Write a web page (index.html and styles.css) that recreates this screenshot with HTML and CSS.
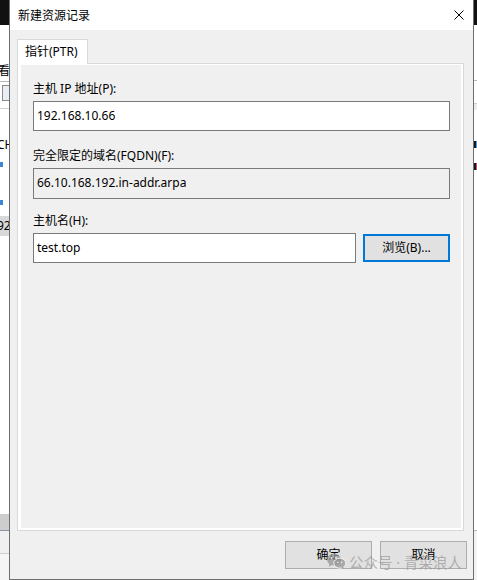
FILE: index.html
```html
<!DOCTYPE html>
<html lang="zh-CN">
<head>
<meta charset="utf-8">
<title>新建资源记录</title>
<link rel="stylesheet" href="styles.css">
</head>
<body>
<div class="screen">
  <!-- window behind the dialog, left edge -->
  <div class="behind behind-left">
    <div class="bk-caption"></div>
    <div class="bk-space s37"></div>
    <div class="bk-menu">看</div>
    <div class="bk-toolbar"><span class="bk-tool"></span></div>
    <div class="bk-space s29"></div>
    <div class="bk-row">CH</div>
    <div class="bk-space s10"></div>
    <div class="bk-mark blue"></div>
    <div class="bk-space s33"></div>
    <div class="bk-mark blue"></div>
    <div class="bk-space s11"></div>
    <div class="bk-row selected">92</div>
    <div class="bk-fill"></div>
    <div class="bk-status"></div>
    <div class="bk-bar"></div>
    <div class="bk-foot"></div>
  </div>

  <div class="dialog">
    <div class="titlebar">
      <span class="title">新建资源记录</span>
      <svg class="close" width="10" height="10" viewBox="0 0 10 10" aria-hidden="true">
        <path d="M0.5 0.5 L9.5 9.5 M9.5 0.5 L0.5 9.5" stroke="#000" stroke-width="1" fill="none"/>
      </svg>
    </div>

    <div class="body">
      <div class="tabs">
        <div class="tab">指针(PTR)</div>
      </div>

      <div class="panel">
        <div class="page">
          <div class="field f-ip">
            <div class="label">主机 IP 地址(P):</div>
            <div class="textbox">192.168.10.66</div>
          </div>
          <div class="field f-fqdn">
            <div class="label">完全限定的域名(FQDN)(F):</div>
            <div class="textbox readonly">66.10.168.192.in-addr.arpa</div>
          </div>
          <div class="field f-host">
            <div class="label">主机名(H):</div>
            <div class="host-row">
              <div class="textbox host">test.top</div>
              <button class="btn focused" type="button">浏览(B)...</button>
            </div>
          </div>
        </div>
      </div>

      <div class="actions">
        <button class="btn" type="button">确定</button>
        <button class="btn" type="button">取消</button>
      </div>
    </div>

    <div class="watermark">
      <svg class="wx" width="19" height="16" viewBox="0 0 19 16" aria-hidden="true">
        <ellipse cx="7" cy="6.5" rx="7" ry="6" fill="currentColor"/>
        <path d="M2.5 10.5 L1.8 13.8 L5.5 11.8 Z" fill="currentColor"/>
        <ellipse cx="12.8" cy="10.2" rx="6" ry="5" fill="currentColor" stroke="#f3f3f3" stroke-width="1"/>
        <path d="M16.2 13.5 L17.2 15.8 L14.2 14.6 Z" fill="currentColor"/>
        <circle cx="4.6" cy="4.8" r="0.9" fill="#f3f3f3"/>
        <circle cx="9" cy="4.8" r="0.9" fill="#f3f3f3"/>
        <circle cx="10.8" cy="9.2" r="0.8" fill="#f3f3f3"/>
        <circle cx="14.6" cy="9.2" r="0.8" fill="#f3f3f3"/>
      </svg>
      <span>公众号 · 青菜浪人</span>
    </div>
  </div>

  <!-- window behind the dialog, right edge -->
  <div class="behind behind-right">
    <div class="bk-caption"></div>
    <div class="bk-space s55"></div>
    <div class="bk-line"></div>
    <div class="bk-space s22"></div>
    <div class="bk-band"></div>
    <div class="bk-space s31"></div>
    <div class="bk-mark tree"></div>
    <div class="bk-space s15"></div>
    <div class="bk-mark tree pink"></div>
    <div class="bk-fill"></div>
    <div class="bk-line"></div>
    <div class="bk-foot light"></div>
  </div>
</div>
</body>
</html>
```

FILE: styles.css
```css
* {
  box-sizing: border-box;
}

html,
body {
  margin: 0;
  padding: 0;
  background: #ffffff;
}

body {
  font-family: "Noto Sans", "Noto Sans CJK SC", sans-serif;
  font-size: 12px;
  color: #000000;
}

.screen {
  display: grid;
  grid-template-columns: 9px 465px 3px;
  width: 477px;
  height: 580px;
  overflow: hidden;
}

/* ---------- windows behind the dialog ---------- */

.behind {
  display: flex;
  flex-direction: column;
  height: 580px;
  overflow: hidden;
  background: #ffffff;
}

.bk-caption {
  height: 25px;
  background: #111111;
}

.bk-space.s10 { height: 10px; }
.bk-space.s11 { height: 11px; }
.bk-space.s15 { height: 15px; }
.bk-space.s22 { height: 22px; }
.bk-space.s29 { height: 29px; }
.bk-space.s31 { height: 31px; }
.bk-space.s33 { height: 33px; }
.bk-space.s37 { height: 37px; }
.bk-space.s55 { height: 55px; }

.bk-menu {
  height: 19px;
  line-height: 18px;
  font-size: 12px;
  white-space: nowrap;
  margin-left: -2px;
}

.bk-toolbar {
  height: 28px;
  border-top: 1px solid #b9b9b9;
  border-bottom: 1px solid #d0d0d0;
  padding: 3px 0 0 2px;
}

.bk-tool {
  display: block;
  width: 10px;
  height: 16px;
  border: 1px solid #8a8a8a;
  background: #e8eef4;
}

.bk-row {
  height: 14px;
  line-height: 14px;
  white-space: nowrap;
  margin-left: -3px;
}

.bk-row.selected {
  height: 20px;
  line-height: 20px;
  margin-left: 0;
  padding-left: 0;
  background: #d9d9d9;
  text-indent: -3px;
}

.bk-mark {
  height: 5px;
  width: 3px;
}

.bk-mark.blue {
  background: #3b86d6;
}

.bk-mark.tree {
  height: 7px;
  width: 2px;
  background: #1a1a1a;
  box-shadow: 1px 0 0 #4aa3e8;
}

.bk-mark.tree.pink {
  box-shadow: 1px 0 0 #c04a7a;
}

.bk-fill {
  flex: 1;
}

.bk-status {
  height: 17px;
  background: #cdcdcd;
  border-bottom: 1px solid #8896a8;
}

.bk-bar {
  height: 23px;
  background: #f0f0f0;
  border-bottom: 1px solid #cfcfcf;
}

.bk-foot {
  height: 26px;
  background: #f6f6f6;
}

.bk-line {
  height: 1px;
  background: #b9b9b9;
}

.bk-band {
  height: 7px;
  background: #ececec;
  border-top: 1px solid #cfcfcf;
}

.bk-foot.light {
  height: 49px;
  background: #f3f3f3;
}

/* ---------- dialog ---------- */

.dialog {
  position: relative;
  display: flex;
  flex-direction: column;
  height: 580px;
  border-left: 1px solid #6f6f6f;
  border-right: 1px solid #6f6f6f;
  border-bottom: 1px solid #6f6f6f;
  background: #f0f0f0;
}

.titlebar {
  display: flex;
  align-items: center;
  justify-content: space-between;
  height: 30px;
  padding: 0 9px 0 8px;
  background: #ffffff;
}

.title {
  font-family: "Noto Sans CJK SC", sans-serif;
  font-size: 12px;
  line-height: 16px;
  margin-top: -1px;
}

.close {
  display: block;
  margin-top: -1px;
}

.body {
  flex: 1;
  display: flex;
  flex-direction: column;
  padding: 9px 0 10px 7px;
}

.tabs {
  display: flex;
  height: 24px;
}

.tab {
  position: relative;
  z-index: 1;
  width: 71px;
  height: 25px;
  padding-left: 7px;
  border: 1px solid #d9d9d9;
  border-bottom: none;
  background: #ffffff;
  line-height: 23px;
  white-space: nowrap;
}

.panel {
  flex: 1;
  display: flex;
  margin-right: 9px;
  padding: 1px 2px 2px 3px;
  border: 1px solid #d9d9d9;
  background: #ffffff;
}

.page {
  flex: 1;
  padding: 16px 11px 0 12px;
  background: #f0f0f0;
}

.label {
  height: 16px;
  line-height: 16px;
  margin-bottom: 4px;
  white-space: nowrap;
}

.f-fqdn {
  margin-top: 17px;
}

.f-host {
  margin-top: 14px;
}

.textbox {
  height: 30px;
  padding-left: 3px;
  border: 1px solid #7a7a7a;
  background: #ffffff;
  line-height: 27px;
  white-space: nowrap;
}

.textbox.readonly {
  height: 31px;
  line-height: 28px;
  background: #f0f0f0;
}

.host-row {
  display: flex;
  align-items: center;
  gap: 7px;
}

.textbox.host {
  width: 323px;
}

.btn {
  width: 87px;
  height: 28px;
  padding: 0;
  border: 1px solid #adadad;
  background: #e1e1e1;
  font-family: "Noto Sans", "Noto Sans CJK SC", sans-serif;
  font-size: 12px;
  color: #000000;
  line-height: 16px;
}

.btn.focused {
  border: 2px solid #0078d7;
}

.actions {
  display: flex;
  justify-content: flex-end;
  gap: 8px;
  margin-top: 10px;
  padding-right: 6px;
}

/* ---------- overlay mark ---------- */

.watermark {
  position: absolute;
  left: 317px;
  top: 550px;
  display: flex;
  align-items: center;
  gap: 3px;
  height: 22px;
  font-family: "Noto Sans", "Noto Sans CJK SC", sans-serif;
  font-size: 14.5px;
  color: rgba(150, 150, 150, 0.7);
  white-space: nowrap;
  pointer-events: none;
}

.wx {
  display: block;
  color: rgba(150, 150, 150, 0.75);
}
```
